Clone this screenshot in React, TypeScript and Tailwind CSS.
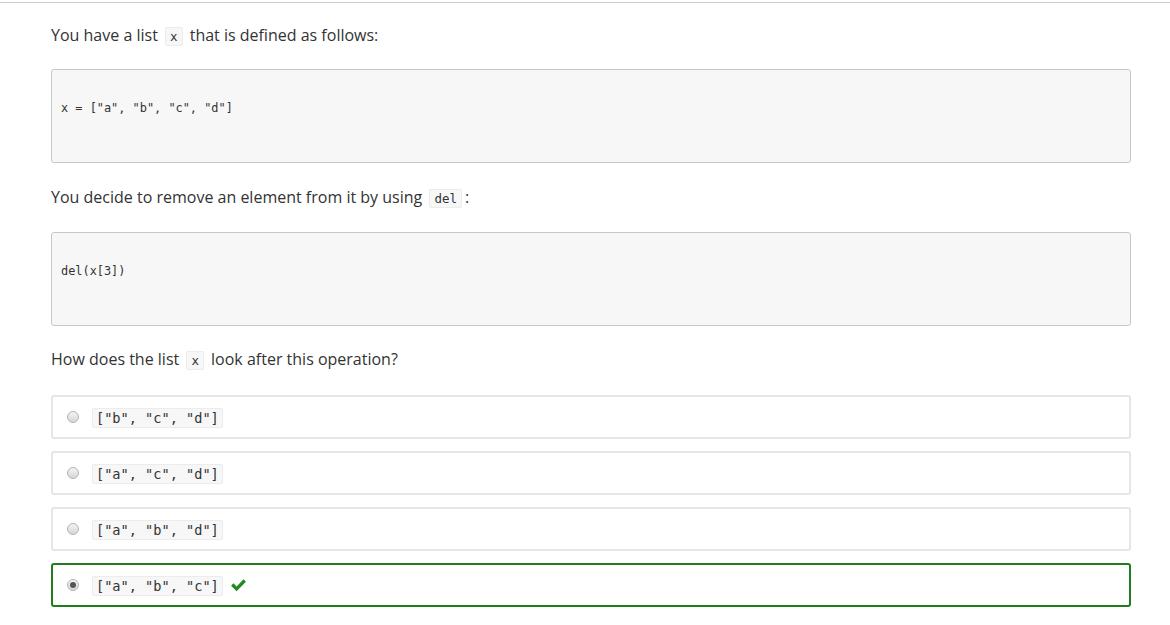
import React from "react";

const mono = "font-['DejaVu_Sans_Mono','Liberation_Mono',monospace]";

function InlineCode({ children }: { children: React.ReactNode }) {
  return (
    <code
      className={`${mono} mx-[3px] rounded-[2px] border border-[#ececec] bg-[#f7f7f7] px-[4px] py-[1px] text-[12.5px] text-[#333]`}
    >
      {children}
    </code>
  );
}

function CodeBlock({ code }: { code: string }) {
  return (
    <pre
      className={`${mono} h-[94px] rounded-[3px] border border-[#c8c8c8] bg-[#f7f7f7] px-[9px] pt-[30px] text-[11.9px] leading-[16px] text-[#333]`}
    >
      {code}
    </pre>
  );
}

function Radio({ checked }: { checked?: boolean }) {
  return (
    <span className="flex h-[12px] w-[12px] items-center justify-center rounded-full border border-[#b5b5b5] bg-gradient-to-b from-[#f4f4f4] to-[#d6d6d6]">
      {checked && <span className="h-[6px] w-[6px] rounded-full bg-[#555]" />}
    </span>
  );
}

const options = [
  { text: '["b", "c", "d"]' },
  { text: '["a", "c", "d"]' },
  { text: '["a", "b", "d"]' },
  { text: '["a", "b", "c"]', correct: true },
];

export default function App() {
  return (
    <div className="min-h-[625px] w-[1170px] bg-white font-['Open_Sans','Liberation_Sans',sans-serif] text-[#333]">
      <div className="h-[2px]" />
      <div className="h-px bg-[#cfcfcf]" />
      <div className="w-[1080px] pl-[51px] box-content">
        <p className="mt-[20px] text-[16px] leading-[24px]">
          You have a list <InlineCode>x</InlineCode> that is defined as follows:
        </p>
        <div className="mt-[20px]">
          <CodeBlock code={'x = ["a", "b", "c", "d"]'} />
        </div>
        <p className="mt-[22px] text-[16px] leading-[24px]">
          You decide to remove an element from it by using <InlineCode>del</InlineCode>:
        </p>
        <div className="mt-[21px]">
          <CodeBlock code={"del(x[3])"} />
        </div>
        <p className="mt-[21px] text-[16px] leading-[24px]">
          How does the list <InlineCode>x</InlineCode> look after this operation?
        </p>
        <div className="mt-[22px] flex flex-col gap-[12px]">
          {options.map((o, i) => (
            <div
              key={i}
              className={`flex h-[44px] items-center rounded-[3px] border-2 pl-[14px] ${
                o.correct ? "border-[#1e7e1e]" : "border-[#e6e6e6]"
              }`}
            >
              <Radio checked={o.correct} />
              <span className="ml-[13px]">
                <code
                  className={`${mono} rounded-[2px] border border-[#ececec] bg-[#f7f7f7] px-[3px] py-[1px] text-[13.6px] text-[#333] whitespace-pre`}
                >
                  {o.text}
                </code>
              </span>
              {o.correct && (
                <svg
                  className="ml-[7px]"
                  width="17"
                  height="14"
                  viewBox="0 0 16 13"
                >
                  <path
                    d="M1 7.2 L3.3 4.9 L6.2 7.8 L12.8 1.2 L15 3.5 L6.2 12.3 Z"
                    fill="#218a21"
                  />
                </svg>
              )}
            </div>
          ))}
        </div>
      </div>
    </div>
  );
}
